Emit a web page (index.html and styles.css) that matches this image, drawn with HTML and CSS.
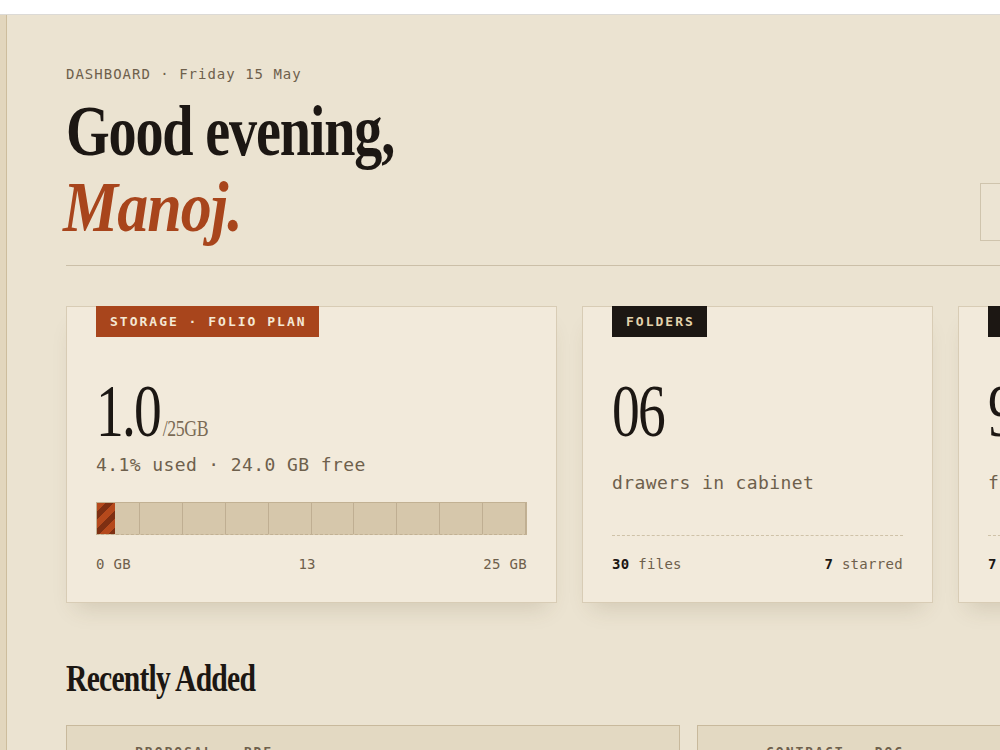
FILE: index.html
```html
<!DOCTYPE html>
<html lang="en">
<head>
<meta charset="UTF-8" />
<meta name="viewport" content="width=device-width, initial-scale=1" />
<title>Folio · Dashboard</title>
<link rel="stylesheet" href="styles.css">
</head>
<body>
  <div class="topbar"></div>
  <div class="app">
    <aside class="sidebar"></aside>

    <main class="content">
      <header class="page-head">
        <div>
          <p class="eyebrow">DASHBOARD · Friday 15 May</p>
          <h1 class="greeting">
            <span class="line">Good evening,</span>
            <span class="line name">Manoj.</span>
          </h1>
        </div>
        <div class="search"></div>
      </header>

      <section class="stats">
        <!-- storage -->
        <div class="card">
          <span class="badge rust">STORAGE · FOLIO PLAN</span>
          <div class="figure">1.0<span class="unit">/25GB</span></div>
          <p class="sub tight">4.1% used · 24.0 GB free</p>
          <div class="meter">
            <div class="seg"></div><div class="seg"></div><div class="seg"></div><div class="seg"></div><div class="seg"></div>
            <div class="seg"></div><div class="seg"></div><div class="seg"></div><div class="seg"></div><div class="seg"></div>
            <div class="fill" style="width: 4.1%"></div>
          </div>
          <div class="scale">
            <span>0 GB</span>
            <span>13</span>
            <span>25 GB</span>
          </div>
        </div>

        <!-- folders -->
        <div class="card">
          <span class="badge dark">FOLDERS</span>
          <div class="figure">06</div>
          <p class="sub">drawers in cabinet</p>
          <div class="card-foot">
            <span><b>30</b> files</span>
            <span><b>7</b> starred</span>
          </div>
        </div>

        <!-- activity -->
        <div class="card">
          <span class="badge dark">THIS WEEK</span>
          <div class="figure">9</div>
          <p class="sub">files added</p>
          <div class="card-foot">
            <span><b>7</b> edited</span>
            <span><b>2</b> shared</span>
          </div>
        </div>
      </section>

      <h2 class="section-title">Recently Added</h2>

      <section class="recent">
        <div class="recent-item">
          <span class="kind">PROPOSAL</span>
          <span class="kind">PDF</span>
        </div>
        <div class="recent-item">
          <span class="kind">CONTRACT</span>
          <span class="kind">DOC</span>
        </div>
      </section>
    </main>
  </div>
</body>
</html>
```

FILE: styles.css
```css
html, body {
  margin: 0;
  overflow: hidden;
}
body {
  background: #ebe3d1;
  color: #1c1713;
  font-family: "DejaVu Sans Mono", "Liberation Mono", monospace;
}
.topbar {
  height: 14px;
  background: #fff;
  border-bottom: 1px solid #dcdad6;
}
.app {
  display: flex;
  min-height: 735px;
}
.sidebar {
  width: 6px;
  flex-shrink: 0;
  background: #e2d6bd;
  border-right: 1px solid #cdbd9d;
}
.content {
  width: 1243px;
  flex-shrink: 0;
  padding: 50px 0 0 59px;
}

/* header */
.page-head {
  display: flex;
  justify-content: space-between;
  align-items: flex-end;
  padding-bottom: 20px;
  border-bottom: 1px solid #cbbfa8;
}
.eyebrow {
  margin: 0 0 11px;
  font-size: 14px;
  line-height: 18px;
  letter-spacing: 1px;
  color: #6e604c;
}
.greeting {
  margin: 0;
  font-family: "Liberation Serif", serif;
  font-size: 72px;
  line-height: 1.05;
  font-weight: 700;
  letter-spacing: -1.5px;
}
.greeting .line {
  display: block;
  transform: scaleX(.78);
  transform-origin: left;
  white-space: nowrap;
}
.greeting .name {
  color: #a8451c;
  font-style: italic;
  letter-spacing: -1px;
  transform: scaleX(.86);
  margin-left: -3px;
}
.search {
  width: 327px;
  height: 56px;
  margin-bottom: 4px;
  border: 1px solid #cfc4ad;
  background: #ece4d3;
}

/* stat cards */
.stats {
  display: grid;
  grid-template-columns: 491px 351px 351px;
  gap: 25px;
  margin-top: 40px;
}
.card {
  display: flex;
  flex-direction: column;
  align-items: flex-start;
  padding: 0 29px 29px;
  background: #f2eadb;
  border: 1px solid #d8ccb5;
  box-shadow: 0 14px 22px -10px rgba(90, 70, 40, 0.18);
}
.badge {
  margin-top: -1px;
  height: 31px;
  padding: 0 12px 0 14px;
  font-size: 13px;
  line-height: 31px;
  font-weight: 700;
  letter-spacing: 2px;
  white-space: nowrap;
}
.badge.rust {
  background: #a8451c;
  color: #f4e8d4;
}
.badge.dark {
  background: #1c1713;
  color: #e3d3ad;
}
.figure {
  margin-top: 36px;
  font-family: "Liberation Serif", serif;
  font-size: 75px;
  line-height: 1;
  letter-spacing: -2.5px;
  transform: scaleX(.74);
  transform-origin: left;
  white-space: nowrap;
}
.figure .unit {
  margin-left: 4px;
  font-size: 24px;
  letter-spacing: -.5px;
  color: #7a6a55;
}
.sub {
  margin: 23px 0 0;
  font-size: 18px;
  line-height: 24px;
  letter-spacing: .4px;
  color: #6e604c;
}
.sub.tight {
  margin-top: 5px;
}

/* storage meter */
.meter {
  position: relative;
  align-self: stretch;
  display: grid;
  grid-template-columns: repeat(10, 1fr);
  height: 31px;
  margin-top: 25px;
  background: #d6c7ab;
  border: 1px solid #c2b193;
  border-bottom-style: dashed;
}
.seg {
  border-right: 1px solid #bfae92;
}
.seg:last-of-type {
  border-right: none;
}
.fill {
  position: absolute;
  left: 0;
  top: 0;
  bottom: 0;
  background: repeating-linear-gradient(135deg, #b5491c 0 6px, #7e2f12 6px 12px);
}
.scale {
  align-self: stretch;
  display: flex;
  justify-content: space-between;
  margin-top: 20px;
  font-size: 14px;
  line-height: 18px;
  letter-spacing: .3px;
  color: #6e604c;
}
.card-foot {
  align-self: stretch;
  display: flex;
  justify-content: space-between;
  margin-top: auto;
  padding-top: 19px;
  border-top: 1px dashed #cfc2a8;
  font-size: 14px;
  line-height: 18px;
  letter-spacing: .3px;
  color: #6e604c;
}
.card-foot b {
  color: #1c1713;
}

/* recently added */
.section-title {
  margin: 55px 0 0;
  font-family: "Liberation Serif", serif;
  font-size: 38px;
  line-height: 1.1;
  font-weight: 700;
  letter-spacing: -1px;
  transform: scaleX(.78);
  transform-origin: left;
  white-space: nowrap;
}
.recent {
  display: grid;
  grid-template-columns: 614px 1fr;
  gap: 17px;
  margin-top: 25px;
}
.recent-item {
  display: flex;
  gap: 30px;
  height: 120px;
  padding: 18px 0 0 68px;
  background: #e3d9c2;
  border: 1px solid #c8b99c;
}
.kind {
  font-size: 13px;
  line-height: 16px;
  font-weight: 700;
  letter-spacing: 2px;
  color: #6e604c;
}
```
